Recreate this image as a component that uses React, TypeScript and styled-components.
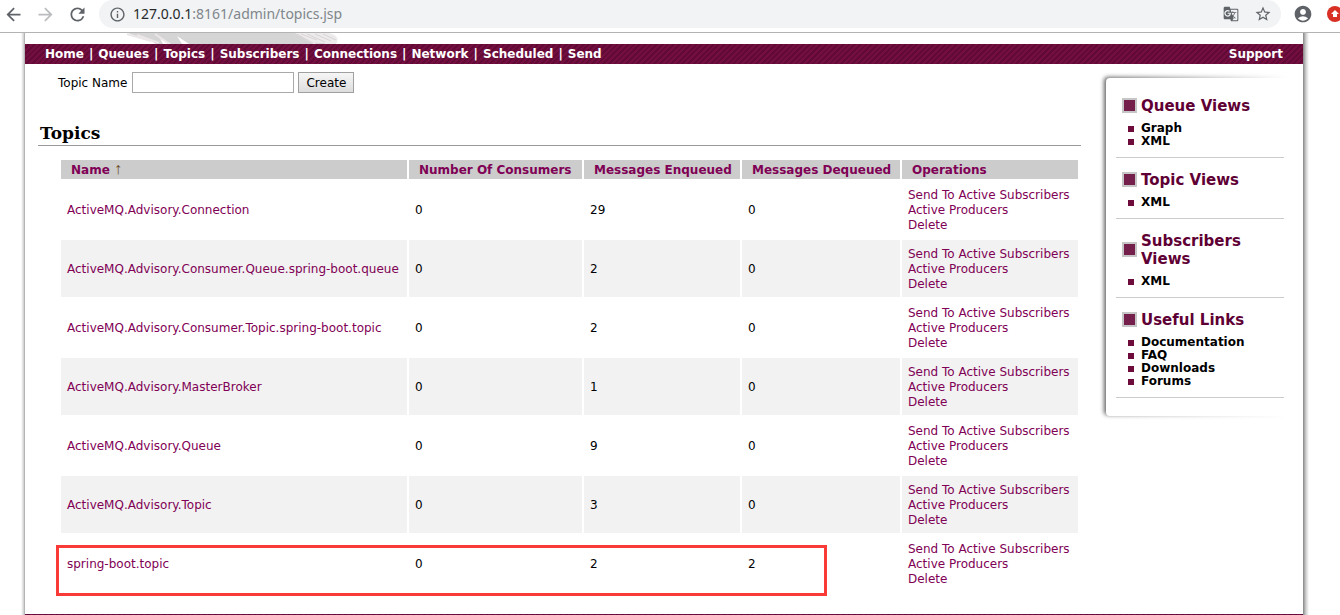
import React from "react";
import styled, { createGlobalStyle } from "styled-components";
import {
  MdAccountCircle,
  MdArrowBack,
  MdArrowForward,
  MdGTranslate,
  MdInfoOutline,
  MdRefresh,
  MdStarBorder,
} from "react-icons/md";

const maroon = "#6d0b3b";
const linkColor = "#7f0055";
const stripes = `repeating-linear-gradient(135deg, #720f40 0 2px, #620935 2px 4px)`;

const GlobalStyle = createGlobalStyle`
  *, *::before, *::after { box-sizing: border-box; }
  body {
    margin: 0;
    background: #fff;
    color: #000;
    font: 12px/15px "DejaVu Sans", Verdana, sans-serif;
  }
  a { color: ${linkColor}; text-decoration: none; }
`;

const Browser = styled.div`
  display: flex;
  flex-direction: column;
  height: 100vh;
  overflow: hidden;
`;

const Toolbar = styled.header`
  display: flex;
  align-items: center;
  flex: none;
  padding-bottom: 4px;
  border-bottom: 1px solid #b3b3b3;
`;

const NavButtons = styled.div`
  display: flex;
  gap: 6px;
  margin-right: 9px;
`;

const IconButton = styled.button<{ $width?: number; $color?: string }>`
  display: flex;
  align-items: center;
  justify-content: center;
  flex: none;
  width: ${(p) => p.$width ?? 18}px;
  height: 28px;
  padding: 0;
  border: 0;
  background: none;
  color: ${(p) => p.$color ?? "#5f6368"};

  svg { flex: none; }
`;

const AddressBar = styled.div`
  display: flex;
  align-items: center;
  flex: 1;
  height: 28px;
  padding: 0 9px;
  border-radius: 14px;
  background: #f1f3f4;
`;

const Url = styled.div`
  flex: 1;
  margin-left: 7px;
  color: #80868b;
  font: 14px/20px "Noto Sans", sans-serif;
`;

const Host = styled.span`
  color: #27292c;
`;

const AddressActions = styled.div`
  display: flex;
  gap: 14px;
`;

const ProfileActions = styled.div`
  display: flex;
  gap: 14px;
  margin-left: 12px;
`;

const UpdateButton = styled(IconButton)`
  justify-content: flex-start;
  overflow: hidden;
`;

const Viewport = styled.div`
  flex: 1;
  overflow: hidden;
`;

const Page = styled.div`
  margin: 0 31px 0 21px;
  padding: 0 6px 0 4px;
  background:
    linear-gradient(to right, #fff, #d8d8d8 60%, #a4a4a4) left / 4px 100% no-repeat,
    linear-gradient(to left, #fff, #d0d0d0 50%, #868686) right / 6px 100% no-repeat;
`;

const Banner = styled.div`
  height: 11px;
  padding-left: 100px;

  svg { display: block; }
`;

const MenuBar = styled.nav`
  display: flex;
  justify-content: space-between;
  padding: 0 20px;
  background: ${stripes};
  color: #fff;
  font-weight: bold;
  line-height: 20px;

  a { color: #fff; }
`;

const MenuItems = styled.div`
  display: flex;
  gap: 5px;
`;

const Body = styled.div`
  display: flex;
  align-items: flex-start;
  gap: 19px;
  padding-left: 13px;
`;

const Main = styled.main`
  flex: 1;
  min-width: 0;
  padding: 8px 0 20px;
`;

const TopicForm = styled.form`
  display: flex;
  align-items: center;
  gap: 4px;
  padding-left: 20px;
`;

const FieldLabel = styled.label`
  padding: 2px 1px 0 0;
`;

const TextInput = styled.input`
  width: 162px;
  height: 21px;
  padding: 1px 2px;
  border: 1px solid #a9a9a9;
  font: inherit;
`;

const SubmitButton = styled.button`
  width: 56px;
  height: 21px;
  padding: 1px 0 0;
  border: 1px solid #a0a0a0;
  background: linear-gradient(#f6f6f6, #dddddd);
  font: inherit;
`;

const Title = styled.h2`
  margin: 30px 0 12px;
  padding: 0 2px 2px;
  border-bottom: 1px solid #999;
  font: bold 17px/20px "DejaVu Serif", Georgia, serif;
`;

const TableArea = styled.div`
  position: relative;
  margin: 0 1px 0 21px;
`;

const TopicsTable = styled.table`
  width: 100%;
  table-layout: fixed;
  border-spacing: 2px;
`;

const Column = styled.col<{ $width?: number }>`
  width: ${(p) => (p.$width ? `${p.$width}px` : "auto")};
`;

const HeadCell = styled.th`
  padding: 3px 10px 1px;
  background: #ccc;
  color: ${linkColor};
  text-align: left;
  white-space: nowrap;
`;

const SortArrow = styled.span`
  color: #6b4a1c;
  font: 16px/0 "Liberation Serif", serif;
`;

const Row = styled.tr`
  &:nth-child(even) td { background: #f2f2f2; }
`;

const Cell = styled.td`
  padding: 7px 6px 5px;
  white-space: nowrap;
`;

const Operation = styled.a`
  display: block;
`;

const Highlight = styled.div`
  position: absolute;
  left: -3px;
  right: 253px;
  bottom: -2px;
  height: 51px;
  border: 3px solid #fa3a37;
  pointer-events: none;
`;

const Sidebar = styled.aside`
  position: relative;
  isolation: isolate;
  flex: none;
  width: 203px;
  margin-top: 8px;
  padding: 12px 19px 22px 16px;

  &::before {
    content: "";
    position: absolute;
    inset: 6px 8px 4px 6px;
    z-index: -1;
    border-radius: 4px;
    background: #fff;
    box-shadow: -2px -1px 4px #666;
  }

  /* fades the panel's shadow out towards its right end */
  &::after {
    content: "";
    position: absolute;
    inset: 0 0 0 6px;
    z-index: -1;
    background: linear-gradient(to right, transparent, #fff 92%);
  }
`;

const Section = styled.section`
  padding: 13px 0 9px;
  border-bottom: 1px solid #ccc;
`;

const SectionTitle = styled.h3`
  display: flex;
  align-items: center;
  gap: 4px;
  margin: 0 0 7px;
  padding-left: 6px;
  color: #5f0035;
  font-size: 15px;
  line-height: 18px;

  &::before {
    content: "";
    flex: none;
    width: 15px;
    height: 15px;
    margin-bottom: 2px;
    border: 2px solid #c6c6c6;
    background: #75204c;
  }
`;

const LinkList = styled.ul`
  margin: 0;
  padding: 0 0 0 12px;
  list-style: none;
  font-weight: bold;
  line-height: 13px;
`;

const LinkItem = styled.li`
  display: flex;
  align-items: center;
  gap: 7px;

  &::before {
    content: "";
    width: 6px;
    height: 6px;
    background: ${maroon};
  }

  a { color: #000; }
`;

const Footer = styled.footer`
  height: 20px;
  background: ${stripes};
`;

const menu = ["Home", "Queues", "Topics", "Subscribers", "Connections", "Network", "Scheduled", "Send"];

const topics: [string, number, number, number][] = [
  ["ActiveMQ.Advisory.Connection", 0, 29, 0],
  ["ActiveMQ.Advisory.Consumer.Queue.spring-boot.queue", 0, 2, 0],
  ["ActiveMQ.Advisory.Consumer.Topic.spring-boot.topic", 0, 2, 0],
  ["ActiveMQ.Advisory.MasterBroker", 0, 1, 0],
  ["ActiveMQ.Advisory.Queue", 0, 9, 0],
  ["ActiveMQ.Advisory.Topic", 0, 3, 0],
  ["spring-boot.topic", 0, 2, 2],
];

const operations = ["Send To Active Subscribers", "Active Producers", "Delete"];

const sections = [
  { title: "Queue Views", links: ["Graph", "XML"] },
  { title: "Topic Views", links: ["XML"] },
  { title: "Subscribers Views", links: ["XML"] },
  { title: "Useful Links", links: ["Documentation", "FAQ", "Downloads", "Forums"] },
];

const Feather = () => (
  <svg width="220" height="11" viewBox="0 0 220 11" aria-hidden="true">
    <path d="M3 0H182L190 11H64L52 3L57 11H46L34 3L38 11H31L18 3L22 7Z" fill="#d6d5d6" />
    <path d="M2 1L26 8M12 2L34 10M30 1L44 11" stroke="#ebe6e8" strokeWidth="2" />
    <path d="M170 0H204Q216 3 211 11H188Z" fill="#eeebed" />
    <path
      d="M172 1L188 10M176 1L192 7M182 1L200 9M190 1L206 8M198 1L211 7M190 10L200 11"
      stroke="#d9d4d7"
      strokeWidth="1"
      fill="none"
    />
  </svg>
);

const UpdateIcon = () => (
  <svg width="16" height="16" viewBox="0 0 16 16" aria-hidden="true">
    <circle cx="8" cy="8" r="8" fill="#d93025" />
    <path d="M8 4L12 8H10V11H6V8H4Z" fill="#fff" />
  </svg>
);

export default function App() {
  return (
    <Browser>
      <GlobalStyle />
      <Toolbar>
        <NavButtons>
          <IconButton $width={26} aria-label="Back"><MdArrowBack size={21} /></IconButton>
          <IconButton $width={26} $color="#babcbe" aria-label="Forward"><MdArrowForward size={21} /></IconButton>
          <IconButton $width={26} aria-label="Reload"><MdRefresh size={21} /></IconButton>
        </NavButtons>
        <AddressBar>
          <IconButton aria-label="Site information"><MdInfoOutline size={17} /></IconButton>
          <Url><Host>127.0.0.1</Host>:8161/admin/topics.jsp</Url>
          <AddressActions>
            <IconButton aria-label="Translate"><MdGTranslate size={16} /></IconButton>
            <IconButton aria-label="Bookmark"><MdStarBorder size={18} /></IconButton>
          </AddressActions>
        </AddressBar>
        <ProfileActions>
          <IconButton $width={20} aria-label="Profile"><MdAccountCircle size={20} /></IconButton>
          <UpdateButton $width={13} aria-label="Update"><UpdateIcon /></UpdateButton>
        </ProfileActions>
      </Toolbar>
      <Viewport>
        <Page>
          <Banner><Feather /></Banner>
          <MenuBar>
            <MenuItems>
              {menu.map((item, i) => (
                <React.Fragment key={item}>
                  {i > 0 && <span>|</span>}
                  <a href="#">{item}</a>
                </React.Fragment>
              ))}
            </MenuItems>
            <a href="#">Support</a>
          </MenuBar>
          <Body>
            <Main>
              <TopicForm>
                <FieldLabel htmlFor="topic-name">Topic Name</FieldLabel>
                <TextInput id="topic-name" type="text" />
                <SubmitButton type="submit">Create</SubmitButton>
              </TopicForm>
              <Title>Topics</Title>
              <TableArea>
                <TopicsTable>
                  <colgroup>
                    <Column />
                    <Column $width={173} />
                    <Column $width={156} />
                    <Column $width={158} />
                    <Column $width={176} />
                  </colgroup>
                  <thead>
                    <tr>
                      <HeadCell>Name <SortArrow>↑</SortArrow></HeadCell>
                      <HeadCell>Number Of Consumers</HeadCell>
                      <HeadCell>Messages Enqueued</HeadCell>
                      <HeadCell>Messages Dequeued</HeadCell>
                      <HeadCell>Operations</HeadCell>
                    </tr>
                  </thead>
                  <tbody>
                    {topics.map(([name, consumers, enqueued, dequeued]) => (
                      <Row key={name}>
                        <Cell><a href="#">{name}</a></Cell>
                        <Cell>{consumers}</Cell>
                        <Cell>{enqueued}</Cell>
                        <Cell>{dequeued}</Cell>
                        <Cell>
                          {operations.map((op) => <Operation key={op} href="#">{op}</Operation>)}
                        </Cell>
                      </Row>
                    ))}
                  </tbody>
                </TopicsTable>
                <Highlight />
              </TableArea>
            </Main>
            <Sidebar>
              {sections.map(({ title, links }) => (
                <Section key={title}>
                  <SectionTitle>{title}</SectionTitle>
                  <LinkList>
                    {links.map((link) => <LinkItem key={link}><a href="#">{link}</a></LinkItem>)}
                  </LinkList>
                </Section>
              ))}
            </Sidebar>
          </Body>
          <Footer />
        </Page>
      </Viewport>
    </Browser>
  );
}
